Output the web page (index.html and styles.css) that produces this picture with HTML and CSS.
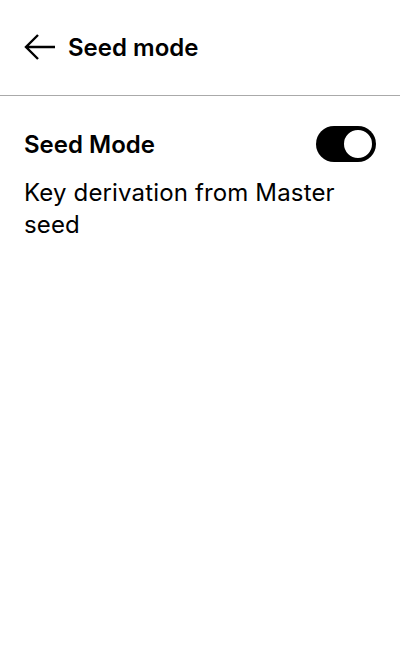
FILE: index.html
```html
<!DOCTYPE html>
<html>
<head>
<meta charset="utf-8">
<link rel="stylesheet" href="styles.css">
</head>
<body>
<header class="header">
  <svg class="back" width="32" height="28" viewBox="0 0 32 28">
    <path d="M31 14H2M14 2L2 14l12 12" fill="none" stroke="#000" stroke-width="2.4"/>
  </svg>
  <h1 class="title">Seed mode</h1>
</header>
<main class="content">
  <div class="row">
    <span class="label">Seed Mode</span>
    <span class="toggle"><span class="knob"></span></span>
  </div>
  <p class="desc">Key derivation from Master seed</p>
</main>
</body>
</html>
```
FILE: styles.css
```css
html, body {
  margin: 0;
  background: #fff;
  color: #000;
  font-family: Inter, "Noto Sans", sans-serif;
}
.header {
  height: 96px;
  box-sizing: border-box;
  display: flex;
  align-items: center;
  gap: 12px;
  padding: 0 24px 1px;
  border-bottom: 1px solid #aaa;
}
.back { display: block; }
.title {
  margin: 0;
  font-size: 24px;
  font-weight: 600;
}
.content { padding: 0 24px; }
.row {
  display: flex;
  align-items: center;
  justify-content: space-between;
  margin-top: 30px;
  height: 36px;
}
.label {
  font-size: 24px;
  font-weight: 600;
}
.toggle {
  width: 60px;
  height: 36px;
  border-radius: 18px;
  background: #000;
  display: flex;
  align-items: center;
  justify-content: flex-end;
  padding: 0 2px;
  box-sizing: border-box;
}
.knob {
  width: 32px;
  height: 32px;
  border-radius: 50%;
  background: #fff;
  border: 2px solid #000;
  box-sizing: border-box;
}
.desc {
  margin: 15px 0 0;
  font-size: 24px;
  line-height: 32px;
  letter-spacing: 0.15px;
}
```
